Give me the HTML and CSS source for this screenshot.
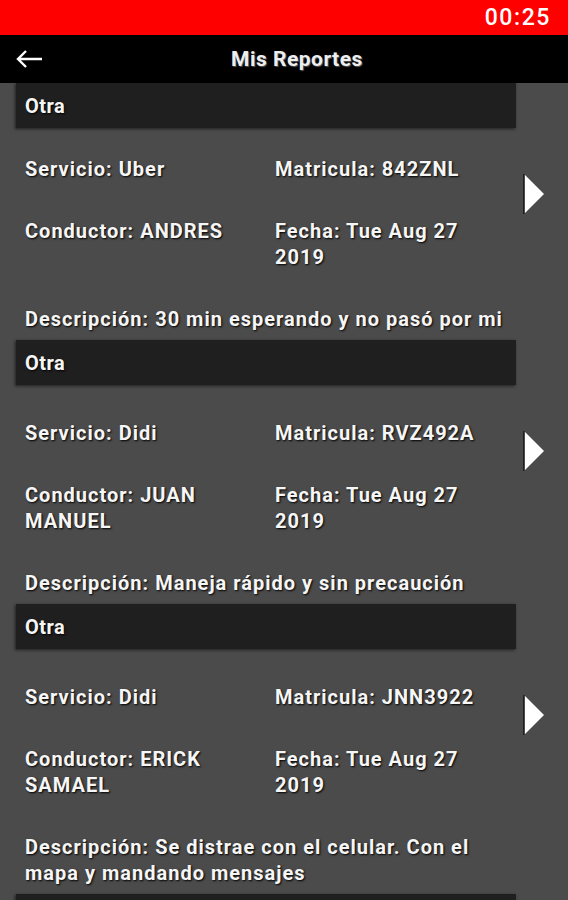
FILE: index.html
```html
<!DOCTYPE html>
<html lang="es">
<head>
    <meta charset="UTF-8">
    <meta name="viewport" content="width=device-width, initial-scale=1.0">
    <title>Mis Reportes</title>
    <link rel="stylesheet" href="styles.css">
</head>
<body>
    <div class="status-bar">
        <span class="clock">00:25</span>
    </div>

    <header class="toolbar">
        <svg class="back" width="28" height="20" viewBox="0 0 28 20">
            <path d="M27 10H3M11 2L3 10l8 8" fill="none" stroke="#fff" stroke-width="2.4"/>
        </svg>
        <h1>Mis Reportes</h1>
    </header>

    <div class="list">
        <div class="card">
            <div class="card-title">Otra</div>
            <div class="card-body">
                <div class="fields">
                    <div>Servicio: Uber</div>
                    <div>Matricula: 842ZNL</div>
                    <div>Conductor: ANDRES</div>
                    <div>Fecha: Tue Aug 27 2019</div>
                    <div class="desc">Descripción: 30 min esperando y no pasó por mi</div>
                </div>
                <svg class="go" width="22" height="42" viewBox="0 0 22 42">
                    <polygon points="1,1 21,21 1,41" fill="#fff"/>
                    <line x1="1" y1="1" x2="1" y2="41" stroke="#111" stroke-width="1.5"/>
                </svg>
            </div>
        </div>

        <div class="card">
            <div class="card-title">Otra</div>
            <div class="card-body">
                <div class="fields">
                    <div>Servicio: Didi</div>
                    <div>Matricula: RVZ492A</div>
                    <div>Conductor: JUAN MANUEL</div>
                    <div>Fecha: Tue Aug 27 2019</div>
                    <div class="desc">Descripción: Maneja rápido y sin precaución</div>
                </div>
                <svg class="go" width="22" height="42" viewBox="0 0 22 42">
                    <polygon points="1,1 21,21 1,41" fill="#fff"/>
                    <line x1="1" y1="1" x2="1" y2="41" stroke="#111" stroke-width="1.5"/>
                </svg>
            </div>
        </div>

        <div class="card">
            <div class="card-title">Otra</div>
            <div class="card-body">
                <div class="fields">
                    <div>Servicio: Didi</div>
                    <div>Matricula: JNN3922</div>
                    <div>Conductor: ERICK SAMAEL</div>
                    <div>Fecha: Tue Aug 27 2019</div>
                    <div class="desc">Descripción: Se distrae con el celular. Con el mapa y mandando mensajes</div>
                </div>
                <svg class="go" width="22" height="42" viewBox="0 0 22 42">
                    <polygon points="1,1 21,21 1,41" fill="#fff"/>
                    <line x1="1" y1="1" x2="1" y2="41" stroke="#111" stroke-width="1.5"/>
                </svg>
            </div>
        </div>

        <div class="card">
            <div class="card-title"></div>
        </div>
    </div>
</body>
</html>
```

FILE: styles.css
```css
body {
    font-family: Roboto, "Liberation Sans", sans-serif;
    background-color: #4b4b4b;
    color: #f6f6f6;
    margin: 0;
    padding: 0;
    height: 900px;
    overflow: hidden;
}

.status-bar {
    background-color: #ff0000;
    height: 35px;
    display: flex;
    align-items: center;
    justify-content: flex-end;
    padding-right: 17px;
}

.clock {
    font-size: 23px;
    font-weight: 500;
    color: #ffffff;
    letter-spacing: 1.6px;
}

.toolbar {
    background-color: #000000;
    height: 48px;
    display: flex;
    align-items: center;
    padding-left: 15px;
}

.toolbar h1 {
    font-size: 21px;
    font-weight: bold;
    letter-spacing: 0.5px;
    margin: 0 0 0 188px;
    color: #eeeeee;
    text-shadow: 1px 1px 1px #555;
}

.back {
    display: block;
}

.card-title {
    background-color: #1f1f1f;
    height: 45px;
    width: 491px;
    margin-left: 16px;
    padding-left: 9px;
    display: flex;
    align-items: center;
    font-size: 20px;
    font-weight: bold;
    letter-spacing: 0.5px;
    text-shadow: 1px 1px 2px #000;
    box-shadow: -1px 1px 3px rgba(0, 0, 0, 0.6);
}

.card-body {
    display: flex;
    align-items: flex-start;
    padding: 35px 0 8px 25px;
}

.fields {
    display: grid;
    grid-template-columns: 250px 215px;
    row-gap: 36px;
    font-size: 20px;
    font-weight: bold;
    line-height: 26px;
    letter-spacing: 1px;
    text-shadow: 1px 1px 2px #000;
}

.card:first-child .fields {
    margin-top: -7px;
}

.desc {
    grid-column: 1 / -1;
    width: 490px;
}

.go {
    margin-top: 10px;
    margin-left: 33px;
    flex-shrink: 0;
}
```
